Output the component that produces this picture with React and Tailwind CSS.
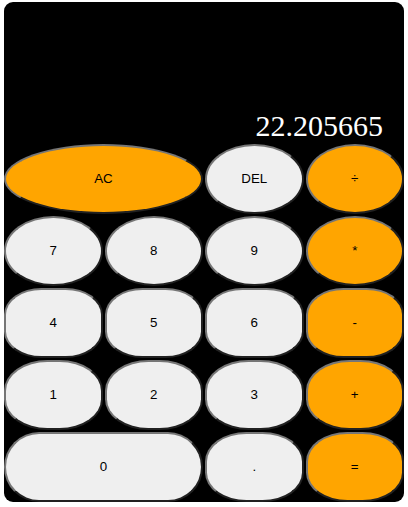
import React from "react";

const rows = [
  [
    { l: "AC", c: "o", span: true },
    { l: "DEL", c: "g" },
    { l: "÷", c: "o" },
  ],
  [
    { l: "7", c: "g" },
    { l: "8", c: "g" },
    { l: "9", c: "g" },
    { l: "*", c: "o" },
  ],
  [
    { l: "4", c: "g" },
    { l: "5", c: "g" },
    { l: "6", c: "g" },
    { l: "-", c: "o" },
  ],
  [
    { l: "1", c: "g" },
    { l: "2", c: "g" },
    { l: "3", c: "g" },
    { l: "+", c: "o" },
  ],
  [
    { l: "0", c: "g", span: true, r: "rounded-[36px]" },
    { l: ".", c: "g" },
    { l: "=", c: "o" },
  ],
];

const radius = [
  "rounded-[50%]",
  "rounded-[50%]",
  "rounded-[38%]",
  "rounded-[44%]",
  "rounded-[42%]",
];

export default function App() {
  return (
    <div className="pl-[4px] pt-[2px]">
      <div className="w-[400px] h-[500px] bg-black rounded-[9px] flex flex-col overflow-hidden">
        <div className="h-[142px] flex items-end justify-end pr-[21px] pb-[3px]">
          <span
            className="text-white text-[30px] leading-none"
            style={{ fontFamily: '"Liberation Serif", "Times New Roman", serif' }}
          >
            22.205665
          </span>
        </div>
        <div className="grid grid-cols-4 gap-x-[2px] gap-y-[2px]">
          {rows.map((row, ri) =>
            row.map((b) => (
              <button
                key={b.l}
                className={`h-[70px] border-2 [border-style:outset] border-[#767676] text-[13.33px] text-black ${
                  b.r || radius[ri]
                } ${b.span ? "col-span-2" : ""} ${
                  b.c === "o" ? "bg-[#ffa500]" : "bg-[#efefef]"
                }`}
                style={{ fontFamily: '"Liberation Sans", Arial, sans-serif' }}
              >
                {b.l}
              </button>
            ))
          )}
        </div>
      </div>
    </div>
  );
}
